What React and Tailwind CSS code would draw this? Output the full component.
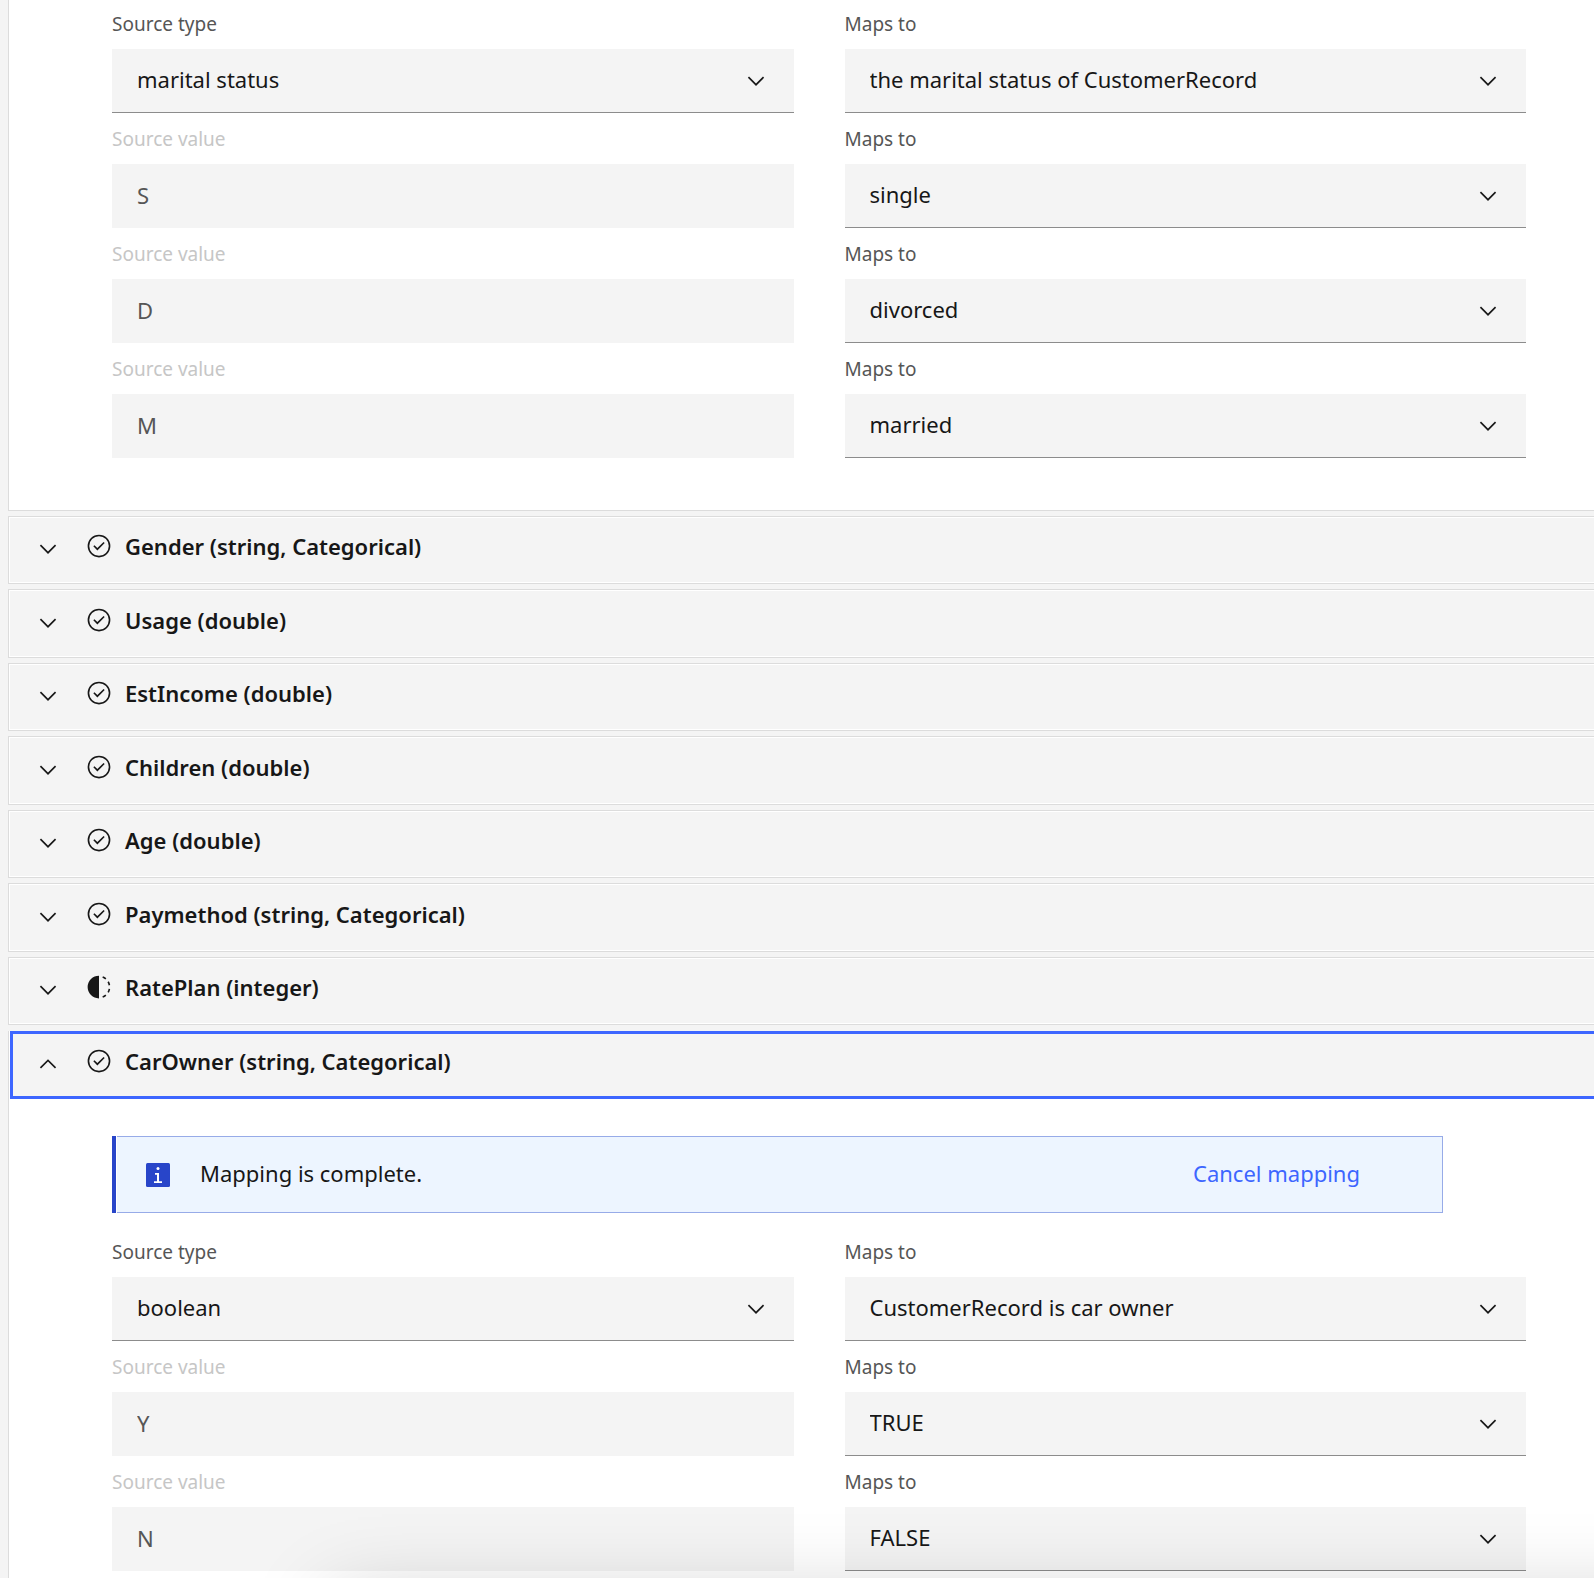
import React, { useId, useState } from "react";

function Chevron({ up = false }) {
  return (
    <svg viewBox="0 0 16 16" width="26" height="26" fill="currentColor" aria-hidden="true" className="shrink-0">
      {up ? (
        <path d="M8 5l5 5-.7.7L8 6.4l-4.3 4.3L3 10z" />
      ) : (
        <path d="M8 11L3 6l.7-.7L8 9.6l4.3-4.3.7.7z" />
      )}
    </svg>
  );
}

function CompleteIcon() {
  return (
    <svg viewBox="0 0 32 32" width="26" height="26" fill="currentColor" aria-hidden="true" className="shrink-0">
      <path d="M14 21.414L9 16.413 10.413 15 14 18.586 21.585 11 23 12.415z" />
      <path d="M16 2a14 14 0 1014 14A14 14 0 0016 2zm0 26a12 12 0 1112-12 12 12 0 01-12 12z" />
    </svg>
  );
}

function IncompleteIcon() {
  return (
    <svg viewBox="0 0 32 32" width="26" height="26" fill="currentColor" aria-hidden="true" className="shrink-0">
      <path d="M23.764 6.859l1.285-1.531A13.976 13.976 0 0020.867 2.887l-.683 1.878a11.973 11.973 0 013.58 2.094zM27.81 14l1.968-.413A13.889 13.889 0 0028.14 9.046L26.409 10A12.52 12.52 0 0127.81 14zM20.184 27.235l.683 1.878a13.976 13.976 0 004.182-2.441l-1.285-1.531a11.973 11.973 0 01-3.58 2.094zM26.409 22l1.731 1a14.14 14.14 0 001.638-4.587l-1.968-.347A12.152 12.152 0 0126.409 22zM16 30V2a14 14 0 000 28z" />
    </svg>
  );
}

function InfoIcon() {
  return (
    <svg viewBox="0 0 24 24" width="24" height="24" aria-hidden="true" className="shrink-0">
      <rect width="24" height="24" rx="1.5" fill="#2845c9" />
      <circle cx="12" cy="5.6" r="1.5" fill="#fff" />
      <path d="M9 10h4v8.3h3V20H8v-1.7h3v-6.6H9z" fill="#fff" />
    </svg>
  );
}

function SelectField({ label, value }) {
  const id = useId();
  return (
    <div className="flex flex-col gap-[13px]">
      <label htmlFor={id} className="text-[19px] leading-6 text-[#565656]">{label}</label>
      <div className="relative">
        <select
          id={id}
          defaultValue={value}
          className="block h-16 w-full appearance-none border-b border-[#8c8c8c] bg-[#f4f4f4] pr-16 pb-0.5 pl-[25px] text-[22px] text-[#171717]"
        >
          <option>{value}</option>
        </select>
        <span className="pointer-events-none absolute inset-y-0 right-[25px] flex items-center">
          <Chevron />
        </span>
      </div>
    </div>
  );
}

function ValueField({ label, value }) {
  const id = useId();
  return (
    <div className="flex flex-col gap-[13px]">
      <label htmlFor={id} className="text-[19px] leading-6 text-[#c6c6c6]">{label}</label>
      <input
        id={id}
        disabled
        defaultValue={value}
        className="block h-16 w-full bg-[#f4f4f4] px-[25px] pb-0.5 text-[22px] text-[#565656]"
      />
    </div>
  );
}

function MappingForm({ sourceType, target, values }) {
  return (
    <div className="grid grid-cols-2 gap-x-[51px] gap-y-[14px]">
      <SelectField label="Source type" value={sourceType} />
      <SelectField label="Maps to" value={target} />
      {values.map(([from, to]) => (
        <React.Fragment key={from}>
          <ValueField label="Source value" value={from} />
          <SelectField label="Maps to" value={to} />
        </React.Fragment>
      ))}
    </div>
  );
}

function HeaderContent({ name, complete, open }) {
  return (
    <>
      <Chevron up={open} />
      <span className="ml-[25px] flex items-center gap-[13px] pb-1.5">
        {complete ? <CompleteIcon /> : <IncompleteIcon />}
        <span className="text-[22px] leading-7 font-semibold">{name}</span>
      </span>
    </>
  );
}

const collapsed = [
  ["Gender (string, Categorical)", true],
  ["Usage (double)", true],
  ["EstIncome (double)", true],
  ["Children (double)", true],
  ["Age (double)", true],
  ["Paymethod (string, Categorical)", true],
  ["RatePlan (integer)", false],
];

export default function App() {
  const [open, setOpen] = useState(true);
  return (
    <main className="h-screen overflow-hidden bg-[#f4f4f4] pl-2 font-['Noto_Sans',sans-serif] text-[#171717]">
      <section className="border-b border-l border-[#dcdcdc] bg-white pt-3 pr-[68px] pb-[52px] pl-[103px]">
        <MappingForm
          sourceType="marital status"
          target="the marital status of CustomerRecord"
          values={[["S", "single"], ["D", "divorced"], ["M", "married"]]}
        />
      </section>

      <div className="mt-[5px] flex flex-col gap-[5px]">
        {collapsed.map(([name, complete]) => (
          <section key={name} className="border-y border-l border-[#dcdcdc] odd:h-[68px] even:h-[69px]">
            <button type="button" aria-expanded="false" className="flex h-full w-full items-center border-y border-l border-white pb-0.5 pl-[25px] text-left">
              <HeaderContent name={name} complete={complete} open={false} />
            </button>
          </section>
        ))}
      </div>

      <section className="mt-1.5 border-l border-[#dcdcdc] bg-white pl-px">
        <button
          type="button"
          aria-expanded={open}
          onClick={() => setOpen(!open)}
          className="flex h-[68px] w-full items-center border-y-3 border-l-3 border-[#3d66ff] bg-[#f4f4f4] pb-0.5 pl-[22px] text-left"
        >
          <HeaderContent name="CarOwner (string, Categorical)" complete open={open} />
        </button>
        {open && (
          <div className="pt-[37px] pr-[68px] pb-[52px] pl-[102px]">
            <div role="status" className="mr-[83px] mb-[27px] flex h-[77px] items-center border-l-4 border-[#2845c9]">
              <div className="ml-px flex h-full w-full items-center border-y border-r border-[#97abe8] bg-[#edf5ff] pr-[82px] pl-[29px]">
                <InfoIcon />
                <span className="ml-[30px] grow pb-1 text-[22px] leading-7">Mapping is complete.</span>
                <button type="button" className="pb-1 text-[22px] leading-7 text-[#3d66ff]">Cancel mapping</button>
              </div>
            </div>
            <MappingForm
              sourceType="boolean"
              target="CustomerRecord is car owner"
              values={[["Y", "TRUE"], ["N", "FALSE"]]}
            />
          </div>
        )}
      </section>

      <div className="pointer-events-none fixed top-full -right-40 left-[330px] h-80 shadow-[0_20px_80px_rgba(0,0,0,0.2)]" />
    </main>
  );
}
